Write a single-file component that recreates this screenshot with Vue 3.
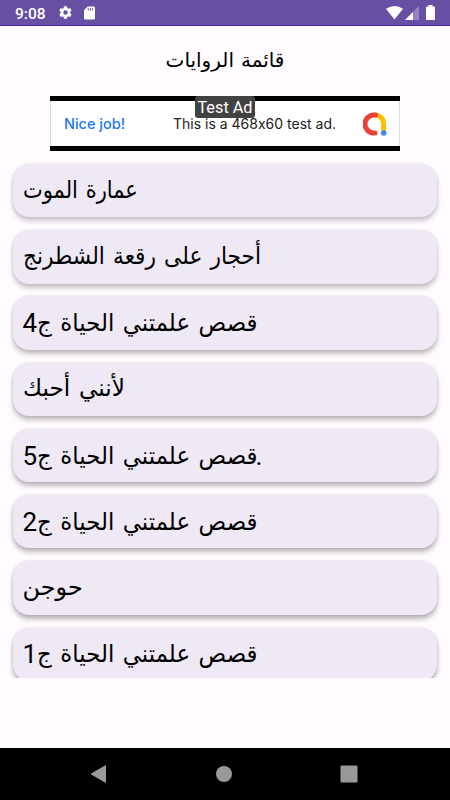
<script setup>
const novels = [
  { text: 'عمارة الموت', fit: 0.873, shade: 0.2 },
  { text: 'أحجار على رقعة الشطرنج', fit: 0.905, shade: 0.22 },
  { text: 'قصص علمتني الحياة ج', fit: 0.953, number: '4', shade: 0.24 },
  { text: 'لأنني أحبك', fit: 0.965, shade: 0.25 },
  { text: 'قصص علمتني الحياة ج', fit: 0.953, number: '5', dot: true, shade: 0.26 },
  { text: 'قصص علمتني الحياة ج', fit: 0.953, number: '2', shade: 0.27 },
  { text: 'حوجن', fit: 1, shade: 0.28 },
  { text: 'قصص علمتني الحياة ج', fit: 0.953, number: '1', shade: 0.28 },
]
</script>

<template>
  <div class="screen">
    <header class="status">
      <span class="clock">9:08</span>
      <svg class="gear" viewBox="0 0 24 24"><path fill-rule="evenodd" d="M19.4 13a7.8 7.8 0 0 0 0-2l2.1-1.7c.2-.1.2-.4.1-.6l-2-3.500c-.1-.2-.4-.3-.6-.2l-2.500 1a7.300 7.300 0 0 0-1.700-1l-.4-2.600a.5.5 0 0 0-.5-.4h-4a.5.5 0 0 0-.5.4L9 5a7.700 7.700 0 0 0-1.700 1l-2.500-1c-.2-.1-.5 0-.6.2l-2 3.500c-.1.2-.1.5.1.6L4.400 11a7.900 7.900 0 0 0 0 2l-2.100 1.700c-.2.1-.2.4-.1.6l2 3.500c.1.2.4.3.6.2l2.500-1c.5.4 1.100.7 1.700 1l.4 2.600c0 .2.2.4.5.4h4c.2 0 .5-.2.5-.4l.4-2.600a7.300 7.300 0 0 0 1.700-1l2.500 1c.2.1.5 0 .6-.2l2-3.500c.1-.2.1-.5-.1-.6zM12 15.500a3.500 3.500 0 1 1 0-7 3.500 3.500 0 0 1 0 7z" /></svg>
      <svg class="sd" viewBox="0 0 12 14"><path fill-rule="evenodd" d="M4 0h6.700Q12 0 12 1.300v11.400Q12 14 10.700 14H1.300Q0 14 0 12.700V4zM4 1.700v2.600h1.200V1.700zM6.300 1.700v2.600h1.200V1.700zM8.600 1.700v2.600h1.200V1.700z" /></svg>
      <span class="spacer"></span>
      <svg class="wifi" viewBox="0 0 17 14"><path d="M0 2.800Q8.500-2.800 17 2.800L8.500 13.600z" /></svg>
      <svg class="cell" viewBox="0 0 14 14"><path opacity=".3" d="M14 0v14H0z" /><path d="M8 6v8H0z" /></svg>
      <svg class="battery" viewBox="0 0 9 15"><path d="M2.500 0h4v1.500H8q1 0 1 1V14q0 1-1 1H1q-1 0-1-1V2.500q0-1 1-1h1.500z" /></svg>
    </header>

    <h1 class="title">قائمة الروايات</h1>

    <section class="ad">
      <span class="praise">Nice job!</span>
      <span class="message">This is a 468x60 test ad.</span>
      <svg class="admob" viewBox="0 0 24 24" fill="none" stroke-width="5" stroke-linecap="round">
        <path stroke="#fbbc04" d="M12 3a8.800 8.800 0 0 1 8.600 8.600V17" />
        <path stroke="#ea4335" d="M12.500 3H11a8.800 8.800 0 0 0 0 18h1" />
        <circle cx="20.700" cy="21" r="2.800" fill="#4285f4" />
      </svg>
      <span class="badge">Test Ad</span>
    </section>

    <main class="list">
      <article v-for="(novel, i) in novels" :key="i" class="card" :style="{ '--fit': novel.fit, '--shade': novel.shade }">
        <span class="label"><span v-if="novel.number" class="number">{{ novel.number }}</span><bdi class="name">{{ novel.text }}</bdi><span v-if="novel.dot" class="dot">.</span></span>
      </article>
    </main>

    <nav class="nav">
      <svg viewBox="0 0 18 18"><path d="M1.500 8.200 15.400.3q.6-.3.600.4v16.600q0 .7-.6.400L1.500 9.800q-1-.8 0-1.600z" /></svg>
      <svg viewBox="0 0 18 18"><circle cx="9" cy="9" r="8" /></svg>
      <svg viewBox="0 0 18 18"><rect x=".5" y=".5" width="17" height="17" rx="1" /></svg>
    </nav>
  </div>
</template>

<style>
body { background: #fffbff; }
</style>

<style scoped>
.screen {
  width: 450px;
  height: 800px;
  display: flex;
  flex-direction: column;
  overflow: hidden;
  background: #fffbff;
  color: #000;
  font-family: Roboto, "DejaVu Sans", sans-serif;
}
.status {
  box-sizing: border-box;
  height: 26px;
  flex: none;
  display: flex;
  align-items: center;
  padding: 0 15px;
  background: #6750a4;
  border-bottom: 1px solid #4b2598;
  color: #fff;
}
.status svg { fill: #fff; flex: none; }
.clock { width: 43px; font-size: 15.500px; font-weight: 500; line-height: 24px; padding-top: 3px; }
.gear { width: 15px; height: 15px; }
.sd { width: 11px; height: 14px; margin-left: 11px; }
.spacer { flex: 1; }
.wifi { width: 17px; height: 14px; }
.cell { width: 14px; height: 14px; margin-left: 2px; }
.battery { width: 9px; height: 15px; margin: 0 0 0 7px; }
.title {
  box-sizing: border-box;
  margin: 0;
  height: 70px;
  flex: none;
  padding-bottom: 3px;
  display: flex;
  justify-content: center;
  align-items: center;
  font-size: 20px;
  font-weight: 400;
  word-spacing: 2px;
}
.ad {
  position: relative;
  box-sizing: border-box;
  width: 350px;
  height: 55px;
  flex: none;
  margin-left: 50px;
  padding: 0 13px 0 14px;
  display: flex;
  align-items: center;
  background: #fff;
  border-top: 5px solid #000;
  border-bottom: 5px solid #000;
  box-shadow: inset 1px 0 #d5dfdf, inset -1px 0 #d5dfdf;
  font-family: Inter, sans-serif;
  font-feature-settings: "calt" 0;
}
.praise { width: 109px; color: #1a78ee; font-size: 14.500px; font-weight: 500; }
.message { flex: 1; color: #222; font-size: 14px; white-space: nowrap; }
.praise, .message { padding-bottom: 1px; }
.admob { width: 24px; height: 24px; }
.badge {
  position: absolute;
  left: 145px;
  top: -5px;
  width: 60px;
  height: 22px;
  line-height: 24px;
  border-radius: 3px;
  background: #424242;
  color: #fff;
  font-family: Roboto, sans-serif;
  font-size: 16.300px;
  text-align: center;
}
.list {
  height: 526.500px;
  flex: none;
  box-sizing: border-box;
  padding: 13px 13px 0;
  display: flex;
  flex-direction: column;
  gap: 12.950px;
  overflow: hidden;
}
.card {
  box-sizing: border-box;
  height: 53.300px;
  flex: none;
  display: flex;
  align-items: center;
  padding: 0 9.500px;
  border-radius: 16px;
  background: #eee9f5;
  box-shadow: 0 4px 5px rgba(0, 0, 0, var(--shade)), 0 0 3px rgba(0, 0, 0, .12);
}
.label {
  display: flex;
  align-items: baseline;
  white-space: nowrap;
}
.number, .dot { font-size: 26px; }
.dot { margin-left: -13px; }
.name {
  display: block;
  font-size: 24px;
  word-spacing: 3px;
  transform: translateY(-1.500px) scaleX(var(--fit));
  transform-origin: left;
}
.nav {
  box-sizing: border-box;
  height: 52px;
  flex: none;
  margin-top: auto;
  padding: 0 92px 0 90px;
  display: flex;
  justify-content: space-between;
  align-items: center;
  background: #000;
}
.nav svg { width: 18px; height: 18px; fill: #999; }
</style>
